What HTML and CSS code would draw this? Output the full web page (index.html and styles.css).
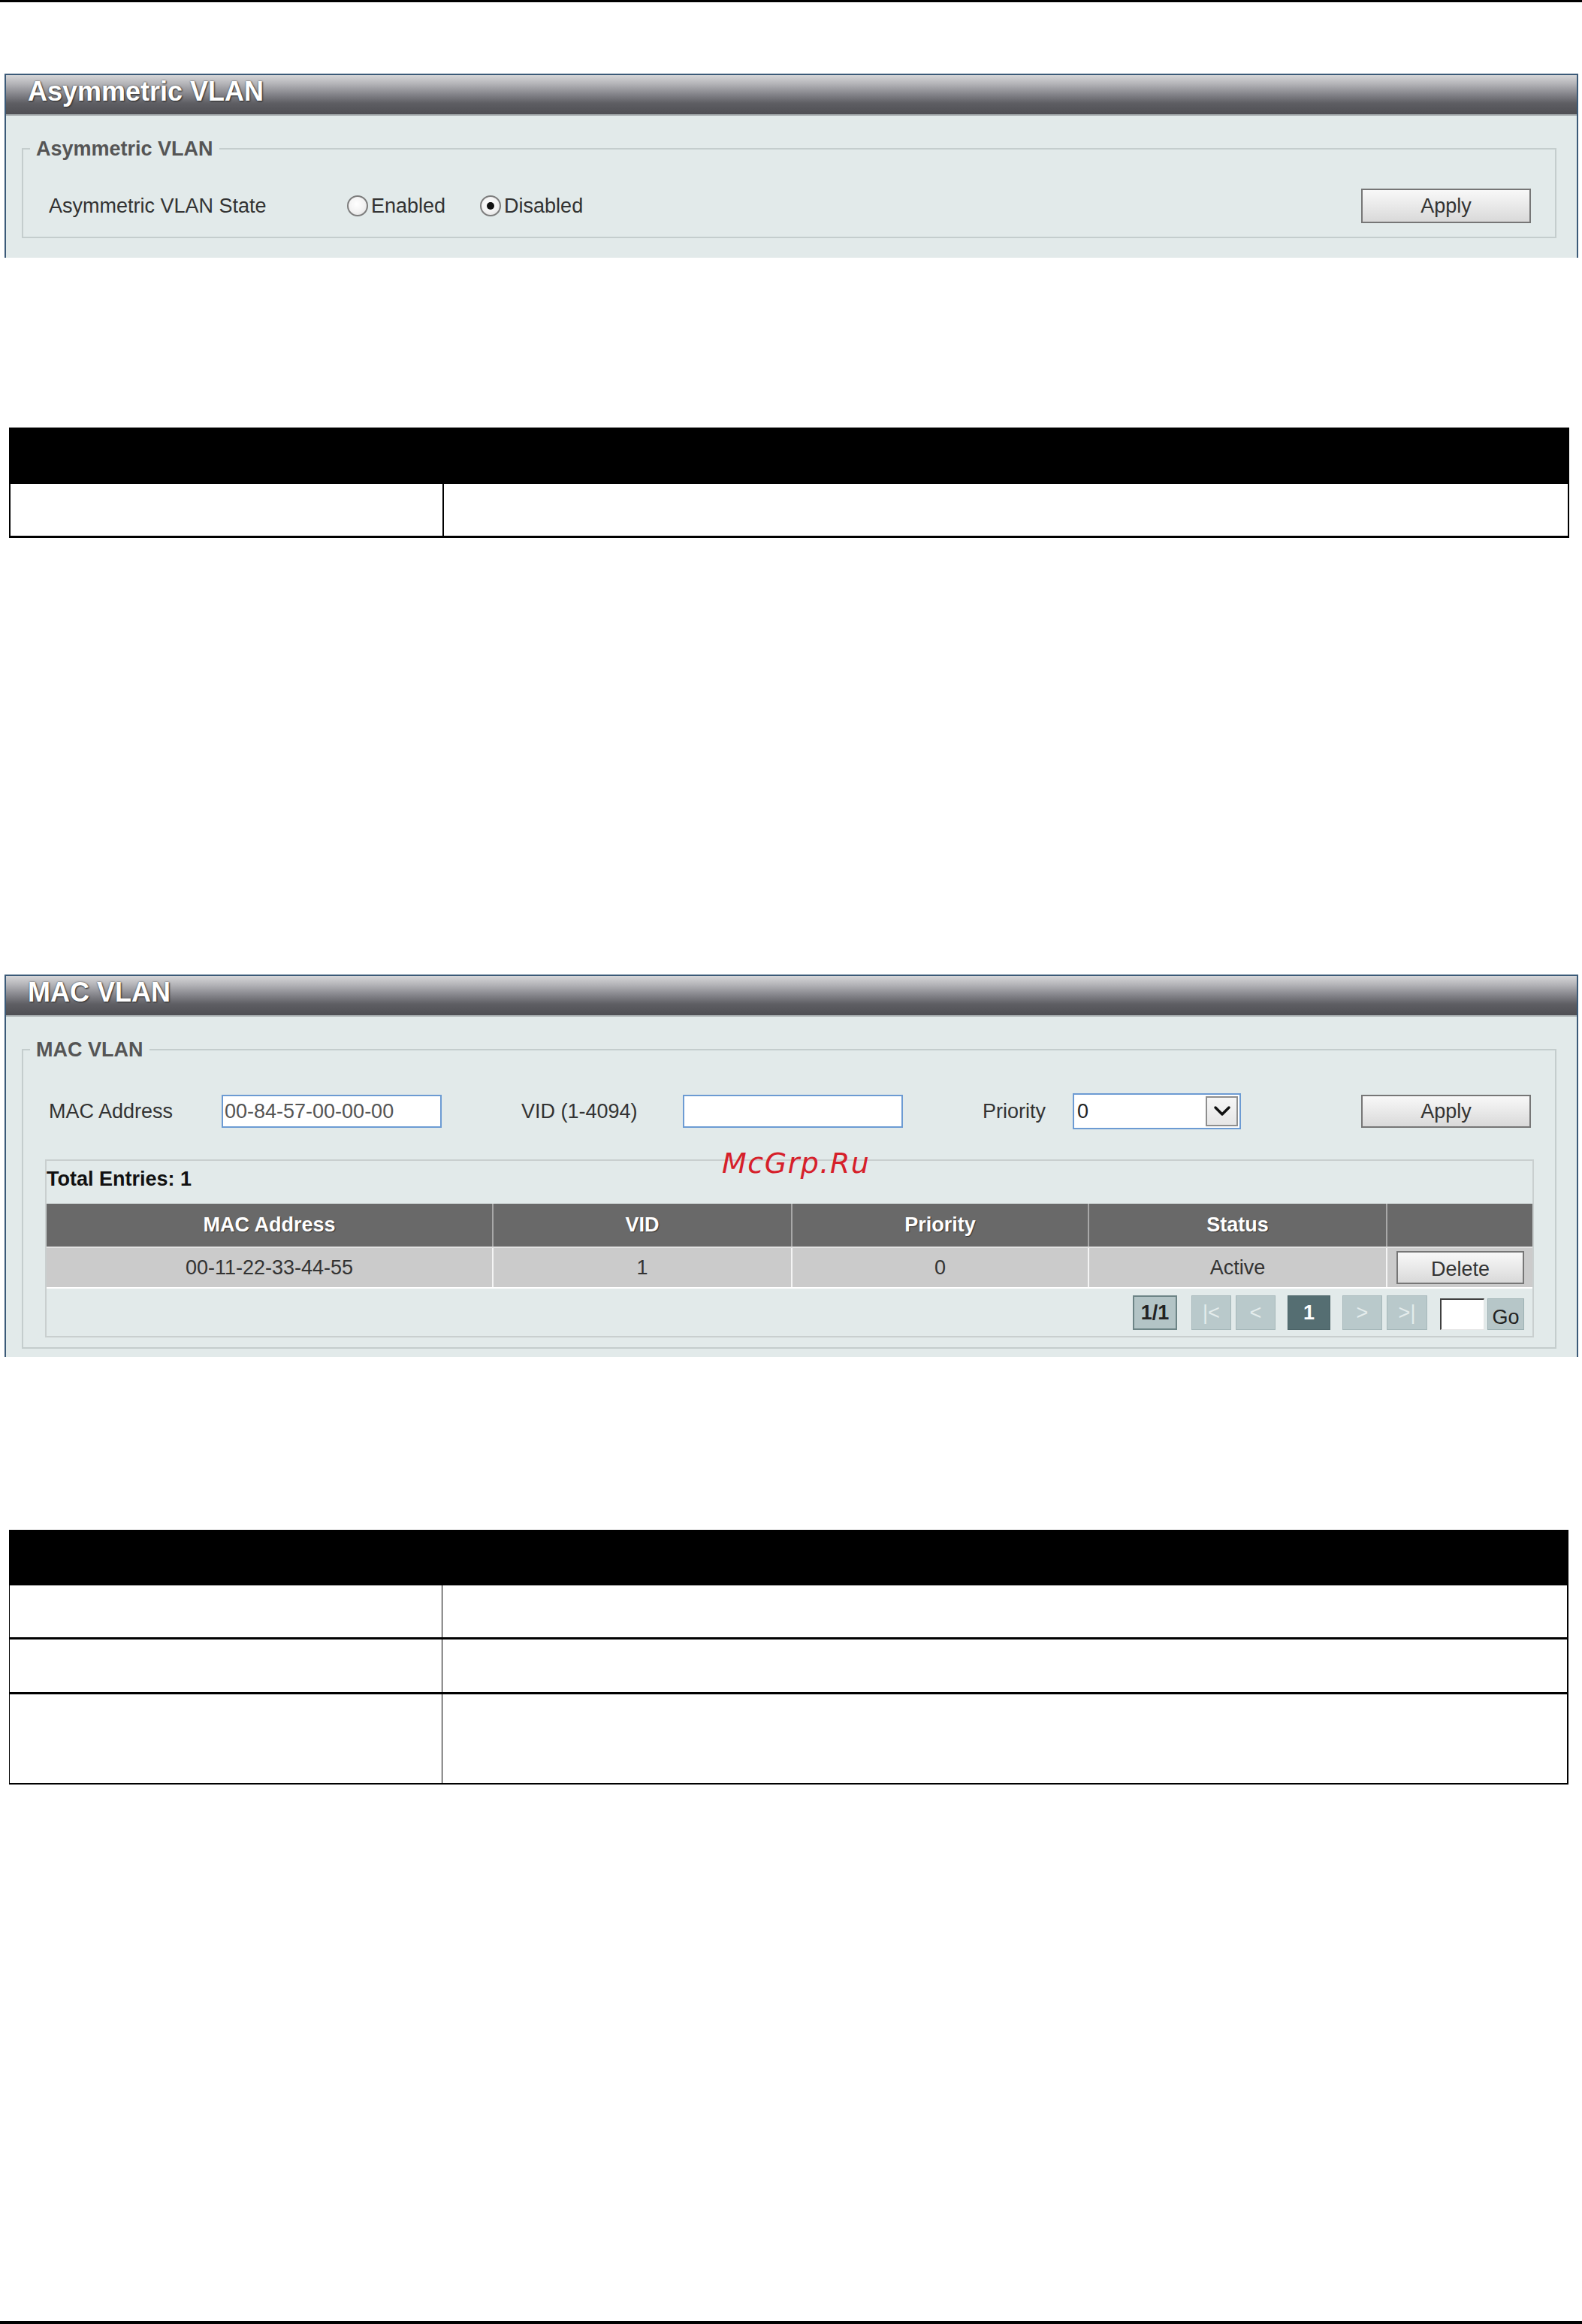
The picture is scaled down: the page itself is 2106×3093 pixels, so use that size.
FILE: index.html
```html
<!DOCTYPE html>
<html lang="en">
<head>
<meta charset="utf-8">
<title>Asymmetric VLAN / MAC VLAN</title>
<link rel="stylesheet" href="styles.css">
</head>
<body>
<div class="page">
  <div class="rule-top"></div>

  <section class="panel panel-asym">
    <div class="panel-title">Asymmetric VLAN</div>
    <fieldset class="group group-asym">
      <legend>Asymmetric VLAN</legend>
      <div class="form-row row-asym">
        <span class="lbl lbl-state">Asymmetric VLAN State</span>
        <label class="radio radio-enabled"><span class="radio-dot"></span>Enabled</label>
        <label class="radio radio-checked"><span class="radio-dot"></span>Disabled</label>
        <button class="btn btn-apply" type="button">Apply</button>
      </div>
    </fieldset>
  </section>

  <div class="deftable deftable-one">
    <div class="def-head"></div>
    <div class="def-row"><div class="def-cell"></div><div class="def-cell"></div></div>
  </div>

  <section class="panel panel-mac">
    <div class="panel-title">MAC VLAN</div>
    <fieldset class="group group-mac">
      <legend>MAC VLAN</legend>
      <div class="form-row row-mac">
        <span class="lbl lbl-mac">MAC Address</span>
        <input class="text-input" type="text" value="00-84-57-00-00-00">
        <span class="lbl lbl-vid">VID (1-4094)</span>
        <input class="text-input" type="text" value="">
        <span class="lbl lbl-prio">Priority</span>
        <div class="select">
          <span class="select-value">0</span>
          <span class="select-btn"><svg width="26" height="20" viewBox="0 0 26 20"><path d="M4 5 L13 14 L22 5" fill="none" stroke="#111" stroke-width="3.5" stroke-linecap="round" stroke-linejoin="round"/></svg></span>
        </div>
        <button class="btn btn-apply" type="button">Apply</button>
      </div>

      <div class="entries">
        <div class="total">Total Entries: 1</div>
        <div class="dt-head">
          <div class="dt-cell">MAC Address</div>
          <div class="dt-cell">VID</div>
          <div class="dt-cell">Priority</div>
          <div class="dt-cell">Status</div>
          <div class="dt-cell"></div>
        </div>
        <div class="dt-row">
          <div class="dt-cell">00-11-22-33-44-55</div>
          <div class="dt-cell">1</div>
          <div class="dt-cell">0</div>
          <div class="dt-cell">Active</div>
          <div class="dt-cell dt-action"><button class="btn btn-delete" type="button">Delete</button></div>
        </div>
        <div class="pager">
          <span class="pg-count">1/1</span>
          <span class="pg-btn pg-first">|&lt;</span>
          <span class="pg-btn pg-prev">&lt;</span>
          <span class="pg-current">1</span>
          <span class="pg-btn pg-next">&gt;</span>
          <span class="pg-btn pg-last">&gt;|</span>
          <input class="pg-input" type="text" value="">
          <span class="pg-go">Go</span>
        </div>
      </div>
    </fieldset>
  </section>

  <div class="deftable deftable-two">
    <div class="def-head def-head-two"></div>
    <div class="def-row def-row-two row-a"><div class="def-cell"></div><div class="def-cell"></div></div>
    <div class="def-row def-row-two row-b"><div class="def-cell"></div><div class="def-cell"></div></div>
    <div class="def-row def-row-two row-c"><div class="def-cell"></div><div class="def-cell"></div></div>
  </div>

  <div class="rule-bottom"></div>

  <div class="watermark">McGrp.Ru</div>
</div>
</body>
</html>
```

FILE: styles.css
```css
html, body {
  margin: 0;
  padding: 0;
  background: #ffffff;
}

.page {
  position: relative;
  width: 2106px;
  height: 3093px;
  overflow: hidden;
  font-family: "Liberation Sans", Arial, sans-serif;
  color: #333333;
}

.rule-top {
  height: 3px;
  background: #000000;
}

.rule-bottom {
  height: 4px;
  background: #000000;
  margin-top: 714px;
}

/* ---------- panels ---------- */
.panel {
  box-sizing: border-box;
  width: 2095px;
  margin-left: 6px;
  border: 2px solid #3b5a78;
  border-bottom: none;
  background: #e2eaea;
  overflow: hidden;
}

.panel-asym { margin-top: 95px; }
.panel-mac { margin-top: 581px; }

.panel-title {
  box-sizing: border-box;
  height: 54px;
  padding-left: 29px;
  line-height: 44px;
  font-size: 36px;
  font-weight: bold;
  color: #ffffff;
  text-shadow: 1px 1px 2px #2a2a2a, 0 0 2px #444444;
  background: linear-gradient(#d6d6d8 0%, #b4b4b8 22%, #86868c 48%, #5e5e63 72%, #4f4f54 100%);
  border-bottom: 2px solid #a4aaac;
}

.group {
  margin: 29px 27px 26px 21px;
  padding: 0;
  border: 2px solid #c4cdcd;
  min-width: 0;
}

.group-mac { margin-bottom: 11px; }

.group legend {
  margin-left: 9px;
  padding: 0 8px;
  font-size: 27px;
  font-weight: bold;
  line-height: 30px;
  color: #555555;
}

.form-row {
  display: flex;
  align-items: center;
  padding: 38px 32px 18px 34px;
  height: 46px;
}

.row-mac {
  padding: 45px 32px 0 34px;
  height: 44px;
}

.lbl {
  font-size: 27px;
  color: #333333;
  white-space: nowrap;
}

.lbl-state { width: 397px; }
.lbl-mac { width: 230px; }
.lbl-vid { width: 215px; margin-left: 106px; }
.lbl-prio { width: 120px; margin-left: 106px; }

/* radios */
.radio {
  display: flex;
  align-items: center;
  font-size: 27px;
  color: #333333;
}

.radio-enabled { margin-right: 46px; }

.radio-dot {
  box-sizing: border-box;
  width: 28px;
  height: 28px;
  margin-right: 4px;
  border-radius: 50%;
  border: 2px solid #7d7d7d;
  background: radial-gradient(circle at 45% 40%, #ffffff 0%, #f2f2f2 55%, #d8d8d8 100%);
  position: relative;
}

.radio-checked .radio-dot::after {
  content: "";
  position: absolute;
  left: 7px;
  top: 7px;
  width: 10px;
  height: 10px;
  border-radius: 50%;
  background: #111111;
}

/* buttons */
.btn {
  box-sizing: border-box;
  font-family: "Liberation Sans", Arial, sans-serif;
  font-size: 27px;
  color: #333333;
  border: 2px solid #767676;
  background: linear-gradient(#f8f8f8, #e9e9e9 50%, #d9d9d9);
  padding: 0;
  cursor: default;
}

.btn-apply {
  width: 226px;
  height: 46px;
  margin-left: auto;
}

.row-mac .btn-apply { height: 44px; }

.btn-delete {
  width: 170px;
  height: 44px;
  padding-top: 4px;
}

/* inputs */
.text-input {
  box-sizing: border-box;
  width: 293px;
  height: 44px;
  margin: 0;
  padding: 0 2px;
  border: 2px solid #6c9bd3;
  background: #ffffff;
  font-family: "Liberation Sans", Arial, sans-serif;
  font-size: 27px;
  color: #555555;
  outline: none;
}

.select {
  box-sizing: border-box;
  width: 224px;
  height: 48px;
  border: 2px solid #6c9bd3;
  background: #ffffff;
  display: flex;
  align-items: center;
  justify-content: space-between;
  padding: 0 2px 0 4px;
}

.select-value {
  font-size: 27px;
  color: #222222;
}

.select-btn {
  box-sizing: border-box;
  width: 43px;
  height: 40px;
  border: 2px solid #8e8e8e;
  background: linear-gradient(#f6f6f6, #e6e6e6);
  display: flex;
  align-items: center;
  justify-content: center;
}

/* entries box */
.entries {
  margin: 42px 28px 13px 29px;
  border: 2px solid #c9cfcf;
}

.total {
  height: 57px;
  box-sizing: border-box;
  padding-bottom: 8px;
  line-height: 49px;
  font-size: 27px;
  font-weight: bold;
  color: #111111;
}

.dt-head,
.dt-row {
  display: grid;
  grid-template-columns: 593px 398px 395px 397px 1fr;
}

.dt-head {
  height: 57px;
  background: #696969;
}

.dt-head .dt-cell {
  display: flex;
  align-items: center;
  justify-content: center;
  font-size: 27px;
  font-weight: bold;
  color: #ffffff;
  text-shadow: 1px 1px 1px #333333;
}

.dt-head .dt-cell + .dt-cell {
  border-left: 2px solid #a8a8a8;
}

.dt-row {
  height: 52px;
  border-top: 2px solid #e2e2e2;
  border-bottom: 2px solid #ffffff;
  background: #cbcbcb;
}

.dt-row .dt-cell {
  display: flex;
  align-items: center;
  justify-content: center;
  font-size: 27px;
  color: #333333;
}

.dt-row .dt-cell + .dt-cell {
  border-left: 2px solid #f4f4f4;
}

.dt-row .dt-action {
  justify-content: flex-end;
  padding-right: 11px;
}

/* pager */
.pager {
  height: 63px;
  box-sizing: border-box;
  display: flex;
  justify-content: flex-end;
  align-items: flex-end;
  padding: 0 11px 8px 0;
}

.pg-count,
.pg-btn,
.pg-current,
.pg-go {
  box-sizing: border-box;
  display: flex;
  align-items: center;
  justify-content: center;
  height: 46px;
  font-size: 27px;
}

.pg-count {
  width: 59px;
  margin-right: 19px;
  background: #b3c4c6;
  border: 2px solid #6d8486;
  font-weight: bold;
  color: #222222;
}

.pg-btn {
  width: 53px;
  background: #b9c9cb;
  border: 1px solid #a6b8ba;
  color: #e4ecec;
}

.pg-prev { margin-left: 6px; }
.pg-last { margin-left: 6px; width: 54px; }

.pg-current {
  width: 57px;
  margin: 0 16px;
  background: #556e72;
  border: 1px solid #4b6367;
  color: #ffffff;
  font-weight: bold;
}

.pg-input {
  box-sizing: border-box;
  width: 59px;
  height: 42px;
  margin: 0 4px 0 17px;
  padding: 0;
  border-top: 2px solid #3f3f3f;
  border-left: 2px solid #3f3f3f;
  border-right: 1px solid #e6e6e6;
  border-bottom: 1px solid #e6e6e6;
  background: #ffffff;
  outline: none;
}

.pg-go {
  width: 49px;
  height: 42px;
  padding-top: 8px;
  background: #b6c6c8;
  border: 1px solid #9db1b3;
  color: #222222;
}

/* definition tables */
.deftable {
  margin-left: 12px;
  box-sizing: border-box;
}

.deftable-one {
  width: 2077px;
  margin-top: 226px;
}

.deftable-two {
  width: 2076px;
  margin-top: 230px;
}

.def-head {
  height: 75px;
  background: #000000;
}

.def-head-two { height: 74px; }

.def-row {
  box-sizing: border-box;
  display: grid;
  grid-template-columns: 577px 1fr;
  height: 72px;
  border-left: 2px solid #000000;
  border-right: 2px solid #000000;
  border-bottom: 3px solid #000000;
}

.def-row .def-cell:first-child {
  border-right: 2px solid #000000;
}

.def-row-two {
  grid-template-columns: 576px 1fr;
  border-left-width: 1px;
  border-right-width: 2px;
}

.def-row-two .def-cell:first-child {
  border-right-width: 1px;
}

.row-a { height: 72px; }
.row-b { height: 73px; }
.row-c { height: 120px; border-bottom-width: 2px; }

/* watermark overlay */
.watermark {
  position: absolute;
  left: 961px;
  top: 1529px;
  font-family: "DejaVu Sans", Verdana, sans-serif;
  font-style: italic;
  font-size: 38px;
  line-height: 38px;
  letter-spacing: 1.5px;
  color: #d6202a;
}
```
